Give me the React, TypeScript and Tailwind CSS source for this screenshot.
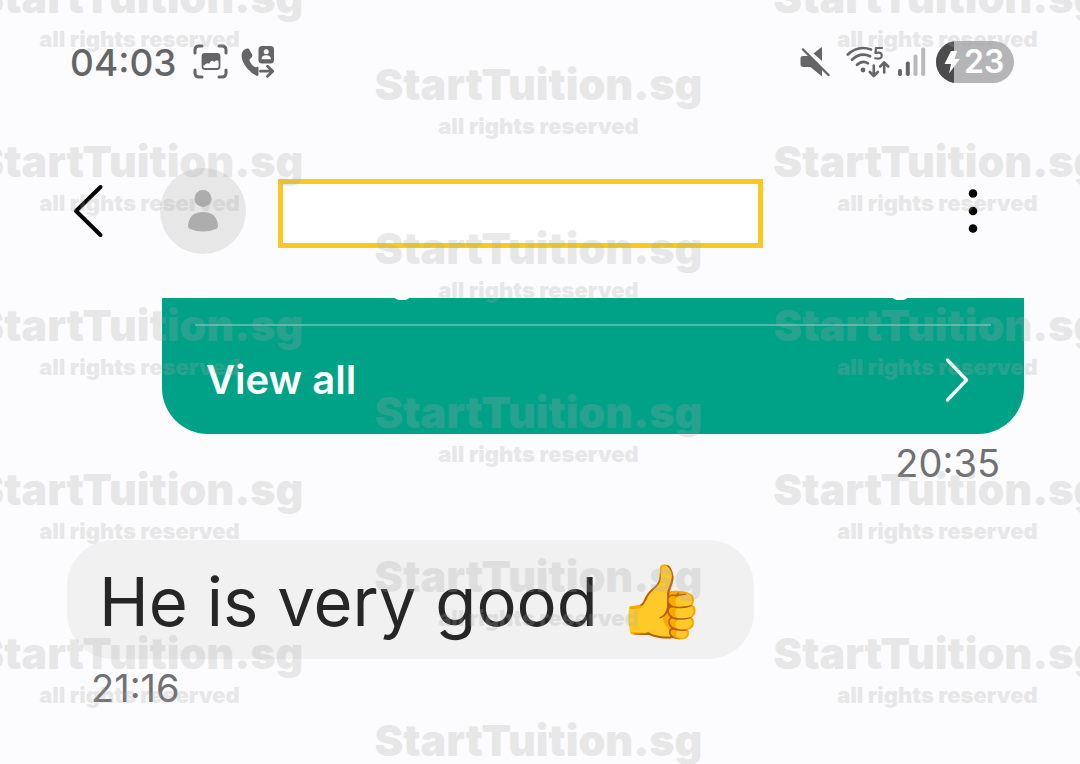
import React from 'react';

function CaptureIcon() {
  return (
    <svg width="36" height="36" viewBox="0 0 36 36" fill="none" aria-hidden="true">
      <path
        d="M2 9V6q0-4 4-4h3M26 2h3q4 0 4 4v3M33 26v3q0 4-4 4h-3M9 33H6q-4 0-4-4v-3"
        stroke="#656567"
        strokeWidth="3"
        strokeLinecap="round"
      />
      <rect x="9.5" y="10" width="17" height="15" rx="2.5" stroke="#656567" strokeWidth="1.8" />
      <path
        d="M9.500 19.500V12q0-2 2-2h13q2 0 2 2v6.500q-1.500-3-3.500-2-1 .5-1.600 1.400-1.900-1.900-3.400-.9-1 .9-1.800 2.800-1.700-1-3.200 0-1.500 1-2 2.200z"
        fill="#656567"
      />
    </svg>
  );
}

function CallForwardIcon() {
  return (
    <svg width="34" height="34" viewBox="0 0 34 34" fill="none" aria-hidden="true">
      <path
        d="M2.500 5.200q2-2 4.300-1.800 1 0 1.500 1l2.800 5q.8 1.600-.6 3l-1.600 1.500q-.9 1-.2 2.300 1.800 3.800 4.600 5.600 1.200.8 2.400.2 1.800-.8 1.800 1v6.500q0 2-2 1.200Q5.500 25.500 1.600 16-.8 9 2.500 5.200z"
        fill="#656567"
      />
      <rect x="17.500" y="1" width="15.500" height="17.500" rx="3.500" fill="#656567" />
      <circle cx="25.200" cy="6.800" r="2.500" fill="#fcfcfe" />
      <path d="M20.500 14.200q0-4 4.700-4t4.700 4z" fill="#fcfcfe" />
      <path
        d="M19.500 26.200h12M26.500 21.200l5.300 5-5.300 5"
        stroke="#656567"
        strokeWidth="2.800"
        strokeLinecap="round"
        strokeLinejoin="round"
      />
    </svg>
  );
}

function MutedIcon() {
  return (
    <svg width="30" height="30" viewBox="0 0 30 30" fill="none" aria-hidden="true">
      <path d="M3 9h6l13 12v8.500L10.500 20H3.500Q.500 20 .500 17v-5.500Q.500 9 3 9z" fill="#656567" />
      <path d="M13.500 6.500l7.500-6q1-.5 1 .5v13z" fill="#656567" />
      <path d="M3 2.500L28.500 28" stroke="#656567" strokeWidth="2.400" strokeLinecap="round" />
    </svg>
  );
}

function WifiIcon() {
  return (
    <svg width="44" height="32" viewBox="0 0 44 32" fill="none" aria-hidden="true">
      <g stroke="#656567" strokeWidth="2.600" strokeLinecap="round">
        <path d="M1.800 8.500Q12-1 25 3.500" />
        <path d="M6 13.800q8.500-8 18.200-3.500" />
        <path d="M11 18.800q5.500-5 11-1.500" />
        <path d="M27.800 19.500v10.200M23.800 26l4 4 4-4" strokeLinejoin="round" />
        <path d="M38.200 26.500V16.800M34.200 20.500l4-4 4 4" strokeLinejoin="round" />
        <path d="M36 2h-6l-.6 5q6.200-1.500 6.400 2.500-.2 4.200-6.600 2.800" strokeWidth="2.200" strokeLinejoin="round" />
      </g>
      <circle cx="17" cy="24" r="2.400" fill="#656567" />
    </svg>
  );
}

function SignalIcon() {
  return (
    <svg width="28" height="30" viewBox="0 0 28 30" aria-hidden="true">
      <rect x="0" y="22" width="4" height="7" rx="1.800" fill="#656567" />
      <rect x="7.800" y="14.500" width="4" height="14.500" rx="1.800" fill="#656567" />
      <rect x="15.500" y="7.500" width="4" height="21.500" rx="1.800" fill="#b9b9bb" />
      <rect x="23.200" y="0.500" width="4" height="28.500" rx="1.800" fill="#b9b9bb" />
    </svg>
  );
}

function StatusBar() {
  return (
    <div className="flex h-[124px] items-center justify-between pr-[66px] pl-[70px] text-[#656567]">
      <div className="flex items-center">
        <span className="text-[37px] leading-none font-medium">04:03</span>
        <span className="ml-[17px] flex items-center gap-3">
          <CaptureIcon />
          <CallForwardIcon />
        </span>
      </div>
      <div className="flex items-center">
        <MutedIcon />
        <span className="ml-4 flex items-center gap-2">
          <WifiIcon />
          <SignalIcon />
        </span>
        <span className="ml-2.5 flex h-[42px] w-[78px] items-center overflow-hidden rounded-full bg-[#b5b5b7]">
          <span className="h-full w-[18px] bg-[#4b4b4d]" />
          <svg width="16" height="24" viewBox="0 0 16 24" className="-ml-2.5" aria-hidden="true">
            <path d="M7 1h6l-2.500 8h5.300L5 23.500l2-9.500H.500z" fill="#fff" />
          </svg>
          <span className="ml-1 text-[32px] leading-none font-semibold text-white">23</span>
        </span>
      </div>
    </div>
  );
}

function ChatHeader() {
  return (
    <header className="flex h-[174px] items-center pr-[95px] pl-[72px]">
      <button type="button" aria-label="Back" className="shrink-0">
        <svg width="32" height="54" viewBox="0 0 32 54" fill="none" className="block">
          <path d="M28.500 3L4 27l24.500 24" stroke="#050505" strokeWidth="4" strokeLinecap="round" strokeLinejoin="round" />
        </svg>
      </button>
      <span className="ml-14 flex size-[86px] shrink-0 items-center justify-center rounded-full bg-[#e7e7e7]">
        <svg width="30" height="42" viewBox="0 0 30 42" fill="#adadad" aria-hidden="true">
          <circle cx="15" cy="8.500" r="8.500" />
          <path d="M0 36Q1 22 15 22t15 14q0 2-2 3-13 5-26 0-2-1-2-3z" />
        </svg>
      </span>
      <div className="mt-1 ml-8 h-[69px] w-[485px] shrink border-5 border-[#fac91b] bg-white" />
      <button type="button" aria-label="More options" className="ml-auto shrink-0">
        <svg width="24" height="46" viewBox="0 0 24 46" fill="#050505" className="block">
          <circle cx="12" cy="5.500" r="4.300" />
          <circle cx="12" cy="23" r="4.300" />
          <circle cx="12" cy="40.500" r="4.300" />
        </svg>
      </button>
    </header>
  );
}

const sideColumn = '-mt-7 w-[399px] shrink-0';
const middleColumn = 'mt-[59px] w-[399px] shrink-0';

function Watermark() {
  return (
    <div
      aria-hidden="true"
      className="pointer-events-none absolute inset-0 overflow-hidden font-black text-[#a6a6a6] select-none"
    >
      <div className="-ml-15 flex items-start opacity-[0.24]">
        {[sideColumn, middleColumn, sideColumn].map((column, i) => (
          <div key={i} className={column}>
            {[0, 1, 2, 3, 4].map((row) => (
              <div key={row} className="h-[164px] text-center whitespace-nowrap">
                <p className="text-[43px] leading-[50px]">StartTuition.sg</p>
                <p className="text-[22px] leading-[34px]">all rights reserved</p>
              </div>
            ))}
          </div>
        ))}
      </div>
    </div>
  );
}

export default function App() {
  return (
    <div className="relative min-h-screen overflow-hidden bg-[#fcfcfe] font-[Inter,sans-serif]">
      <StatusBar />
      <ChatHeader />
      <main>
        <section className="mr-14 ml-[162px]">
          <div className="relative flex h-[136px] flex-col overflow-hidden rounded-b-[46px] bg-[#00a287]">
            <span className="absolute -top-2 left-[232px] h-2.5 w-4 rounded-full bg-white" />
            <span className="absolute -top-2 right-[116px] h-2.5 w-4 rounded-full bg-white" />
            <hr className="mx-[33px] mt-[26px] border-t-2 border-[#4dbda9]" />
            <button type="button" className="flex flex-1 items-center justify-between pr-[54px] pl-11 text-white">
              <span className="text-[40px] leading-none font-semibold">View all</span>
              <svg width="26" height="46" viewBox="0 0 26 46" fill="none" aria-hidden="true">
                <path d="M3.500 3l19 20-19 20" stroke="#f2fffc" strokeWidth="3.400" strokeLinecap="round" strokeLinejoin="round" />
              </svg>
            </button>
          </div>
          <p className="pr-6 text-right text-[38px] leading-[58px] text-[#717173]">20:35</p>
        </section>
        <section className="mt-12 ml-[67px] flex flex-col items-start">
          <p className="h-[119px] w-[687px] max-w-full rounded-[46px] bg-[#f1f1f1] pl-8 text-[67px] leading-[124px] whitespace-nowrap text-[#262626]">
            He is very good <span className="font-['Noto_Color_Emoji'] text-[72px] leading-none">👍</span>
          </p>
          <p className="pl-6 text-[38px] leading-[58px] text-[#717173]">21:16</p>
        </section>
      </main>
      <Watermark />
    </div>
  );
}
